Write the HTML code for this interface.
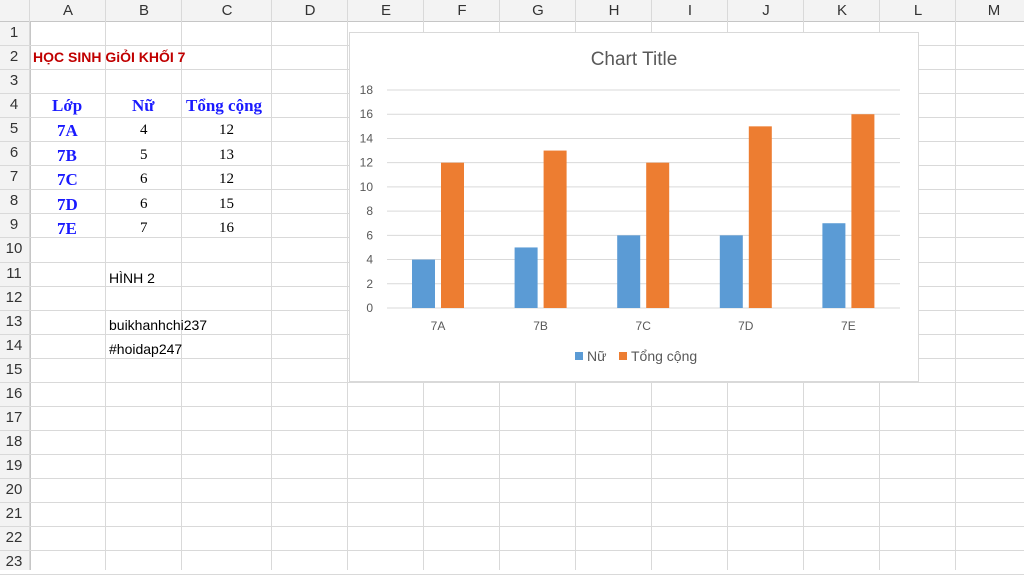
<!DOCTYPE html>
<html><head><meta charset="utf-8"><style>
body{margin:0;width:1024px;height:570px;overflow:hidden;background:#fff;position:relative;font-family:"Liberation Sans",sans-serif}
.hdr{position:absolute;left:0;top:0;width:1024px;height:21px;background:#f3f3f3;border-bottom:1px solid #c6c6c6}
.rh{position:absolute;left:0;top:22px;width:30px;height:548px;background:#f3f3f3;border-right:1px solid #c6c6c6}
.vl{position:absolute;top:0;width:1px;height:570px;background:#d9d9d9}
.hl{position:absolute;left:0;width:1024px;height:1px;background:#d9d9d9}
.ch{position:absolute;top:2px;font-size:15px;color:#333;text-align:center}
.rn{position:absolute;left:0;width:28px;text-align:center;font-size:15px;color:#333}
.t{position:absolute;font-size:14px;color:#000;white-space:nowrap}
.b{font-family:"Liberation Serif",serif;font-weight:bold;color:#1a1aff;font-size:17px}
.n{font-family:"Liberation Serif",serif;font-size:15px}
</style></head><body>
<div class="hdr"></div><div class="rh"></div>
<div id="g"></div>
<script>
(function(){
var cols=[30,106,182,272,348,424,500,576,652,728,804,880,956,1032],L="ABCDEFGHIJKLM",h="";
for(var i=0;i<cols.length;i++)h+='<div class="vl" style="left:'+(cols[i]-1)+'px"></div>';
for(var i=0;i<13;i++)h+='<div class="ch" style="left:'+cols[i]+'px;width:'+(cols[i+1]-cols[i])+'px">'+L[i]+'</div>';
for(var r=1;r<=23;r++){var yy=21+(r-1)*24.05;h+='<div class="hl" style="top:'+Math.round(yy+24.05)+'px"></div>';h+='<div class="rn" style="top:'+Math.round(yy+3)+'px">'+r+'</div>';}
document.getElementById('g').innerHTML=h;
})();
</script>
<div class="t" style="left:33px;top:49px;color:#c00000;font-weight:bold;font-size:14px">HỌC SINH GiỎI KHỐI 7</div>
<div class="t b" style="left:52px;top:96px">Lớp</div>
<div class="t b" style="left:132px;top:96px">Nữ</div>
<div class="t b" style="left:186px;top:96px">Tổng cộng</div>
<div class="t b" style="left:57px;top:121px">7A</div><div class="t n" style="left:140px;top:122px">4</div><div class="t n" style="left:219px;top:122px">12</div>
<div class="t b" style="left:57px;top:146px">7B</div><div class="t n" style="left:140px;top:147px">5</div><div class="t n" style="left:219px;top:147px">13</div>
<div class="t b" style="left:57px;top:170px">7C</div><div class="t n" style="left:140px;top:171px">6</div><div class="t n" style="left:219px;top:171px">12</div>
<div class="t b" style="left:57px;top:195px">7D</div><div class="t n" style="left:140px;top:196px">6</div><div class="t n" style="left:219px;top:196px">15</div>
<div class="t b" style="left:57px;top:219px">7E</div><div class="t n" style="left:140px;top:220px">7</div><div class="t n" style="left:219px;top:220px">16</div>
<div class="t" style="left:109px;top:270px">HÌNH 2</div>
<div class="t" style="left:109px;top:317px">buikhanhchi237</div>
<div class="t" style="left:109px;top:341px">#hoidap247</div>
<svg style="position:absolute;left:349px;top:32px" width="570" height="350" font-family="Liberation Sans,sans-serif">
<rect x="0.5" y="0.5" width="569" height="349" fill="#fff" stroke="#d9d9d9"/>
<text x="285" y="33" text-anchor="middle" font-size="19" fill="#595959">Chart Title</text>
<g stroke="#d9d9d9" id="gl"></g>
<g font-size="12" fill="#595959" text-anchor="end" id="yl"></g>
<g id="bars"></g>
<rect x="226" y="320" width="8" height="8" fill="#5b9bd5"/><text x="238" y="329" font-size="14" fill="#595959">Nữ</text>
<rect x="270" y="320" width="8" height="8" fill="#ed7d31"/><text x="282" y="329" font-size="14" fill="#595959">Tổng cộng</text>
</svg>
<script>
(function(){
var s="",t="",b="";
for(var v=0;v<=18;v+=2){var y=276-v*12.11;s+='<line x1="38" x2="551" y1="'+y+'" y2="'+y+'"/>';t+='<text x="24" y="'+(y+4)+'">'+v+'</text>';}
var nu=[4,5,6,6,7],tc=[12,13,12,15,16],cat=["7A","7B","7C","7D","7E"];
for(var k=0;k<5;k++){var x=63+k*102.6;b+='<rect x="'+x+'" y="'+(276-nu[k]*12.11)+'" width="23" height="'+nu[k]*12.11+'" fill="#5b9bd5"/>';b+='<rect x="'+(x+29)+'" y="'+(276-tc[k]*12.11)+'" width="23" height="'+tc[k]*12.11+'" fill="#ed7d31"/>';b+='<text x="'+(x+26)+'" y="298" font-size="12" fill="#595959" text-anchor="middle">'+cat[k]+'</text>';}
document.getElementById('gl').innerHTML=s;document.getElementById('yl').innerHTML=t;document.getElementById('bars').innerHTML=b;
})();
</script>
</body></html>
